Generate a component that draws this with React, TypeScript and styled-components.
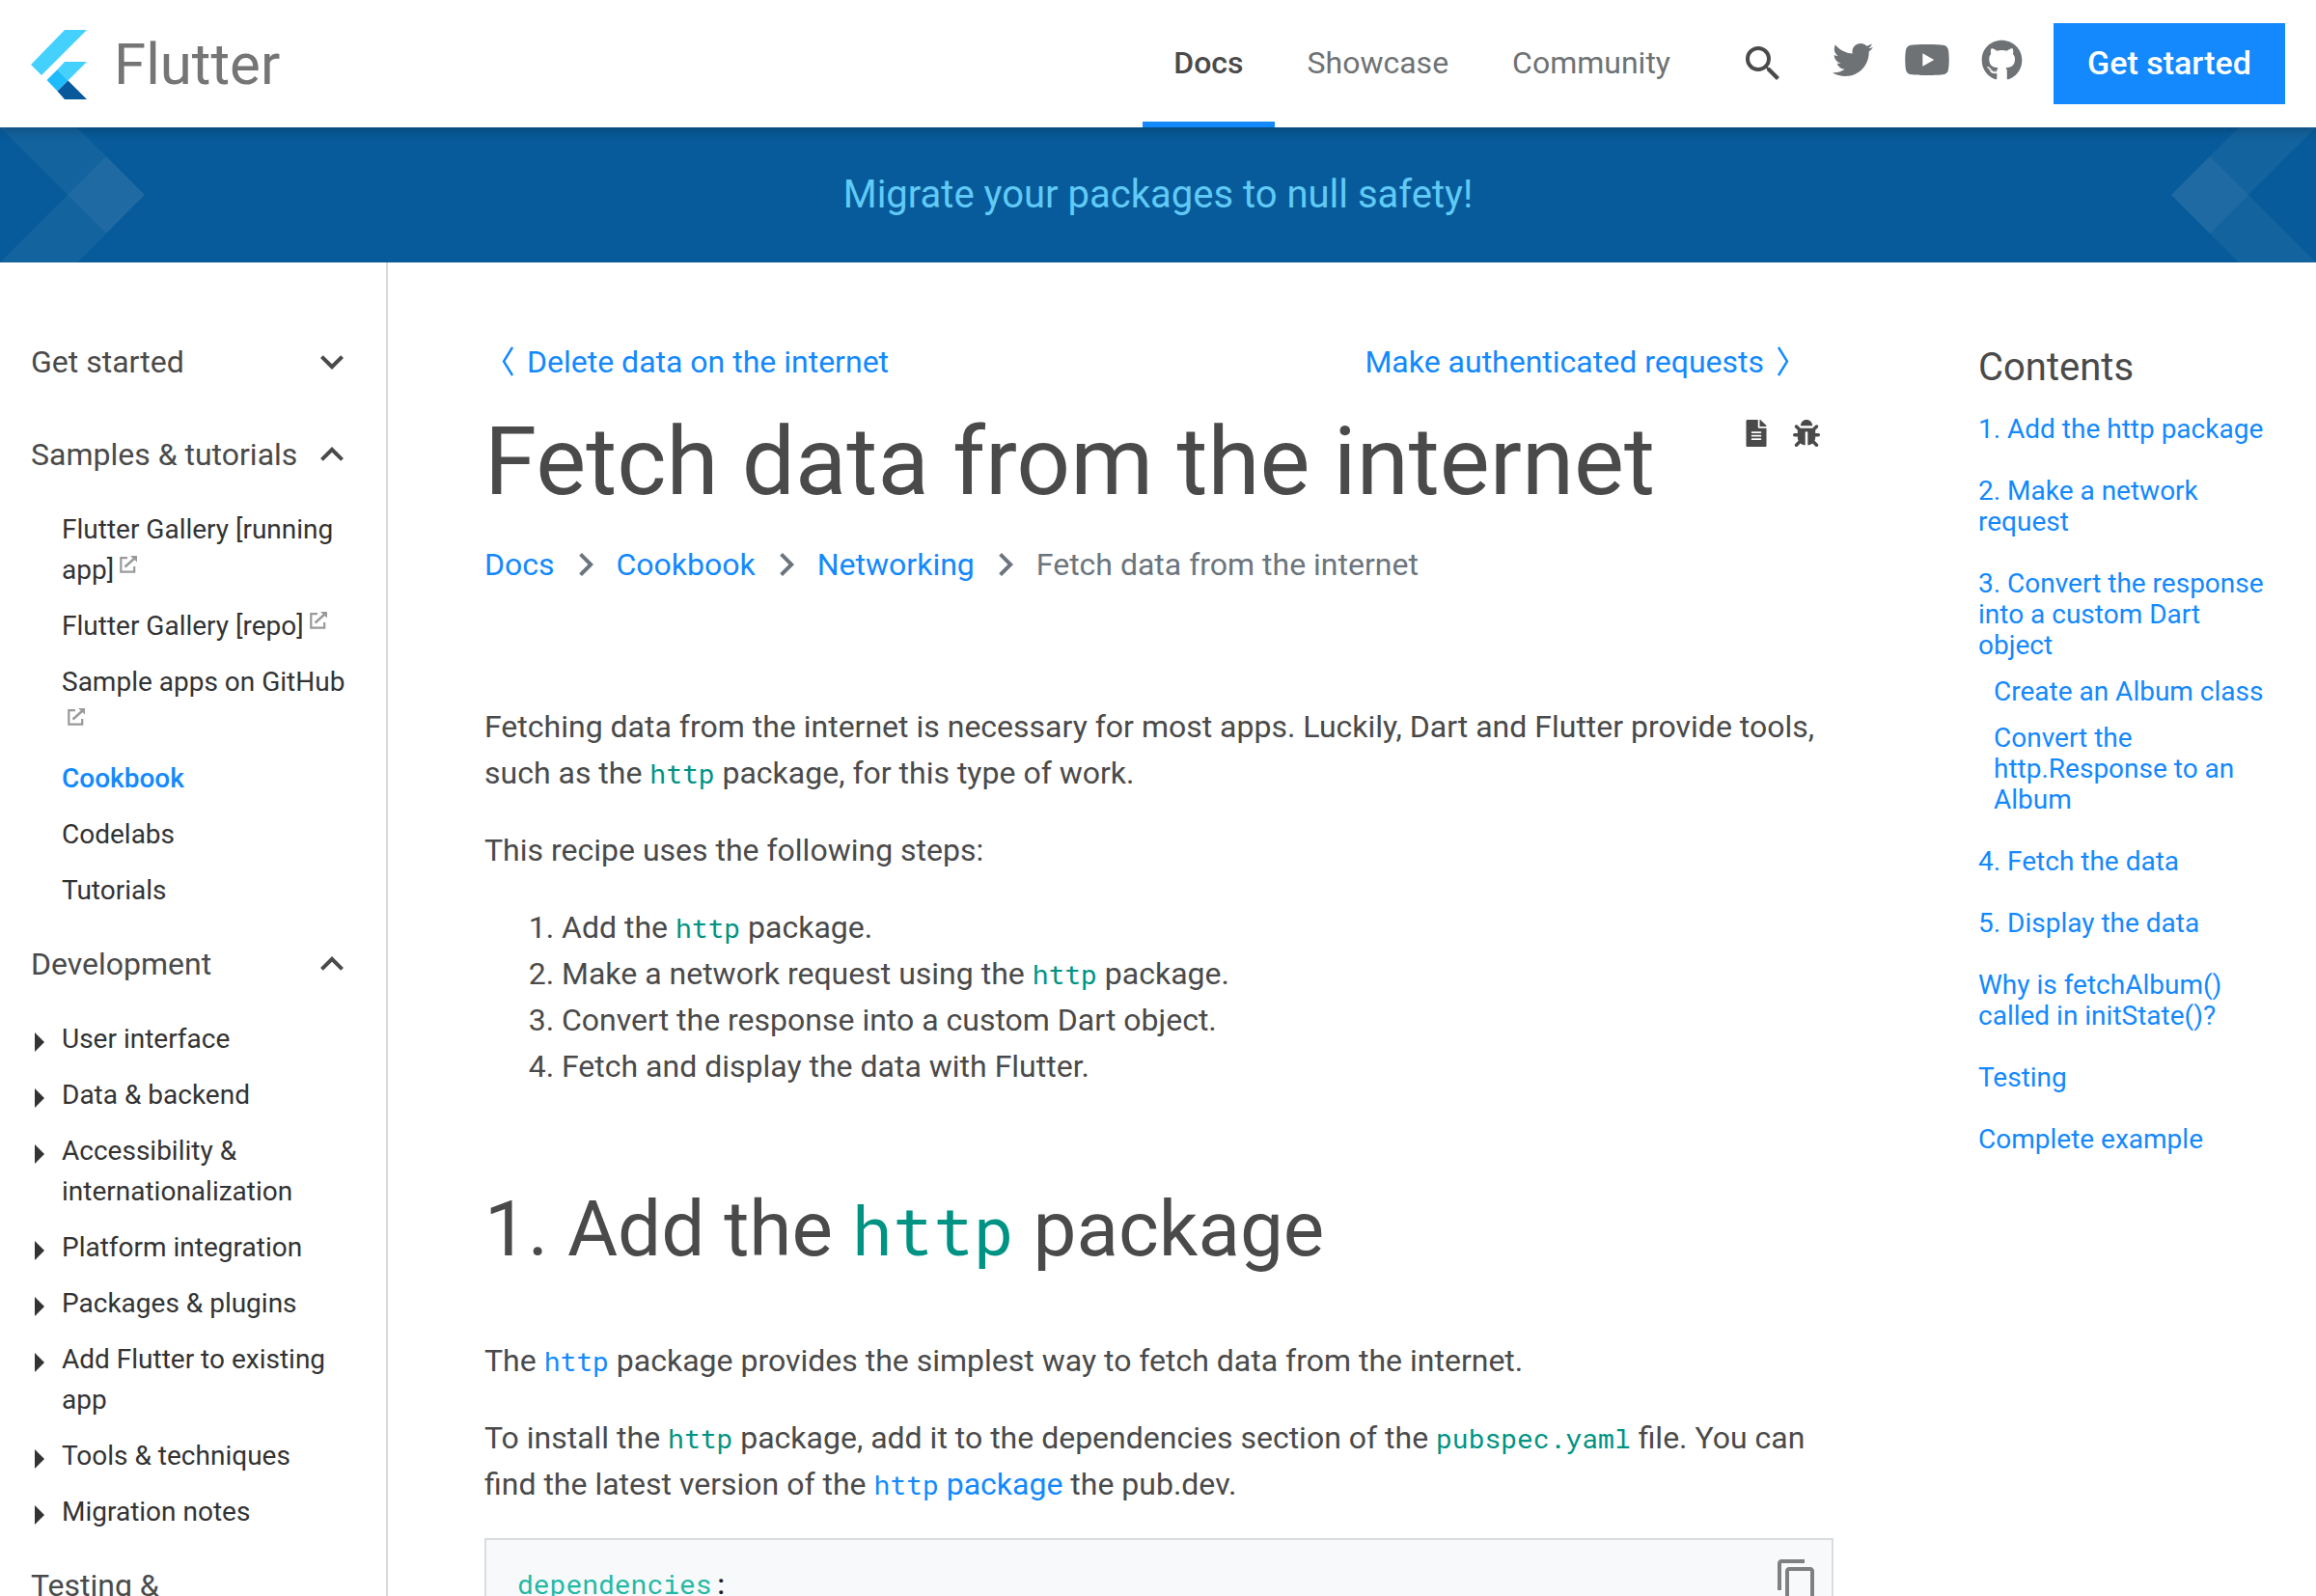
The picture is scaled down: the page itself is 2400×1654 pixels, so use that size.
import React from "react";
import styled, { createGlobalStyle, css } from "styled-components";
import { FaTwitter, FaYoutube, FaGithub, FaFileAlt, FaBug } from "react-icons/fa";
import {
  MdSearch,
  MdExpandMore,
  MdExpandLess,
  MdChevronRight,
  MdContentCopy,
} from "react-icons/md";

const color = {
  text: "#4a4a4a",
  dark: "#333333",
  muted: "#6c757d",
  icon: "#6e7274",
  link: "#1389fd",
  code: "#009384",
  banner: "#075b9a",
};

const font = {
  display: `"Google Sans", Roboto, sans-serif`,
  body: `Roboto, sans-serif`,
  mono: `"Roboto Mono", "DejaVu Sans Mono", monospace`,
};

const GlobalStyle = createGlobalStyle`
  * { box-sizing: border-box; }
  body {
    margin: 0;
    background: #fff;
    color: ${color.text};
    font: 400 32px/48px ${font.body};
  }
  a { color: ${color.link}; text-decoration: none; }
  ul, ol { margin: 0; padding: 0; }
  ul { list-style: none; }
  svg { display: block; flex: none; }
`;

const Page = styled.div`
  display: flex;
  flex-direction: column;
  height: 100vh;
  overflow: hidden;
`;

const Header = styled.header`
  display: flex;
  align-items: center;
  flex: none;
  height: 132px;
  padding: 0 32px;
  background: #fff;
  box-shadow: 0 4px 10px rgba(0, 0, 0, 0.2);
  z-index: 1;
`;

const Brand = styled.a`
  display: flex;
  align-items: center;
  gap: 28px;
  margin-right: auto;
  padding-top: 2px;
  font: 400 60px/72px ${font.display};
  color: #757575;
`;

const Nav = styled.nav`
  display: flex;
  gap: 2px;
  height: 100%;
  font-family: ${font.display};
`;

const NavLink = styled.a<{ $active?: boolean }>`
  display: flex;
  align-items: center;
  padding: 0 32px 2px;
  color: ${color.icon};
  border: solid transparent;
  border-width: 6px 0;
  ${(p) =>
    p.$active &&
    css`
      color: ${color.text};
      font-weight: 500;
      border-bottom-color: ${color.link};
    `}
`;

const IconButton = styled.button`
  padding: 0;
  border: 0;
  background: none;
  color: ${(p) => p.color ?? color.text};
  font-size: 48px;
  line-height: 1;
`;

const SearchButton = styled(IconButton)`
  margin: 0 48px 0 40px;
`;

const Social = styled.div`
  display: flex;
  align-items: center;
  gap: 32px;
  padding-bottom: 8px;
  a { color: ${color.icon}; }
`;

const CtaButton = styled.button`
  min-width: 240px;
  height: 84px;
  margin-left: 32px;
  padding: 0 32px 2px;
  border: 0;
  background: ${color.link};
  color: #fff;
  font: 500 34px/48px ${font.display};
`;

const Banner = styled.div`
  display: flex;
  align-items: center;
  justify-content: space-between;
  flex: none;
  height: 140px;
  background: ${color.banner};
  font: 400 40px/48px ${font.display};
  a { color: #60caf6; }
`;

const Body = styled.div`
  display: flex;
  flex: 1;
  min-height: 0;
`;

const Sidebar = styled.nav`
  flex: none;
  width: 402px;
  padding: 79px 32px 0;
  border-right: 2px solid #d9d9d9;
  font-family: ${font.display};
  overflow: hidden;
`;

const SectionButton = styled.button`
  display: flex;
  align-items: center;
  justify-content: space-between;
  width: 100%;
  padding: 0;
  border: 0;
  background: none;
  color: ${color.text};
  font: inherit;
  text-align: left;
  white-space: nowrap;
`;

const Section = styled.section`
  margin-bottom: 31px;
`;

const CollapsedSection = styled.section`
  margin-bottom: 48px;
`;

const SubList = styled.ul`
  display: flex;
  flex-direction: column;
  gap: 16px;
  margin: 33px -8px 0 0;
  font-size: 28px;
  line-height: 42px;
`;

const SubLink = styled.a<{ $active?: boolean; $branch?: boolean }>`
  display: flex;
  padding-left: ${(p) => (p.$branch ? 4 : 32)}px;
  color: ${(p) => (p.$active ? color.link : color.dark)};
  font-weight: ${(p) => (p.$active ? 500 : 400)};
`;

const Triangle = styled.span`
  flex: none;
  height: 20px;
  margin: 14px 18px 0 0;
  border: solid transparent;
  border-width: 10px 0 10px 10px;
  border-left-color: ${color.dark};
`;

const ExternalMark = styled.svg`
  display: inline-block;
  width: 18px;
  height: 18px;
  margin-left: 6px;
  vertical-align: 6px;
`;

const Main = styled.main`
  flex: 1;
  min-width: 0;
  padding: 79px 150px 0 100px;
`;

const PageNav = styled.nav`
  display: flex;
  justify-content: space-between;
  padding: 0 46px 0 18px;
  a {
    display: flex;
    align-items: center;
    gap: 14px;
  }
`;

const TitleRow = styled.div`
  display: flex;
  justify-content: space-between;
  align-items: flex-start;
  margin: 24px 0 26px;
`;

const Title = styled.h1`
  margin: 0;
  font: 400 98px/112px ${font.display};
`;

const TitleActions = styled.div`
  display: flex;
  gap: 24px;
  padding: 12px 14px 0 0;
  a { color: ${color.text}; }
  svg { width: auto; height: 28px; }
`;

const Breadcrumbs = styled.ol`
  display: flex;
  align-items: center;
  list-style: none;
  gap: 8px;
  margin-bottom: 120px;
  color: ${color.muted};
  li {
    display: flex;
    align-items: center;
    gap: 8px;
  }
`;

const Paragraph = styled.p`
  margin: 0 0 32px;
`;

const Steps = styled.ol`
  padding-left: 80px;
`;

const Heading = styled.h2`
  margin: 97px 0 64px;
  font: 400 80px/96px ${font.display};
`;

const Code = styled.code<{ $size?: number }>`
  color: ${color.code};
  font-family: ${font.mono};
  font-size: ${(p) => p.$size ?? 28}px;
  line-height: 1;
  a & { color: inherit; }
`;

const CodeBlock = styled.div`
  display: flex;
  justify-content: space-between;
  align-items: flex-start;
  padding: 18px 12px 32px 32px;
  border: 2px solid #dadce0;
  background: #f8f9fa;
  pre {
    margin: 7px 0 0;
    color: #212121;
    font: 400 28px/42px ${font.mono};
  }
  pre span { color: #22b8a6; }
`;

const Toc = styled.aside`
  flex: none;
  width: 350px;
  padding: 85px 40px 0 0;
  font-size: 28px;
  line-height: 32px;
`;

const TocTitle = styled.h2`
  margin: 0 0 24px;
  font: 400 40px/48px ${font.display};
`;

const TocList = styled.ul`
  display: flex;
  flex-direction: column;
  gap: 32px;
`;

const TocSubList = styled.ul`
  display: flex;
  flex-direction: column;
  gap: 16px;
  margin: 16px 0 0 16px;
`;

const FlutterMark = () => (
  <svg width="58" height="72" viewBox="0 0 58 72" aria-hidden="true">
    <path d="M35 0H58L11 47L0 36Z" fill="#45d1fd" />
    <path d="M35 33H58L38.5 52.5L27.5 41Z" fill="#45d1fd" />
    <path d="M16.5 52L27.5 41L38.5 52.5L27.5 63.5Z" fill="#1fbcfd" />
    <path d="M38.5 52.5L27.5 63.5L35 72H58Z" fill="#08589c" />
  </svg>
);

const BannerArrow = ({ flip = false }: { flip?: boolean }) => (
  <svg width="150" height="140" viewBox="0 0 150 140" aria-hidden="true">
    <g transform={flip ? "translate(150 0) scale(-1 1)" : undefined} fill="#fff">
      <path d="M0 0H80L150 70L80 140H0L70 70Z" fillOpacity="0.05" />
      <path d="M110 30L150 70L110 110L70 70Z" fillOpacity="0.05" />
    </g>
  </svg>
);

const Angle = ({ right = false }: { right?: boolean }) => (
  <svg width="12" height="32" viewBox="0 0 12 32" fill="none" stroke="currentColor" strokeWidth="2.4" aria-hidden="true">
    <path d={right ? "M1 1L10 15.500L1 30" : "M11 1L2 15.500L11 30"} />
  </svg>
);

const External = () => (
  <ExternalMark viewBox="0 0 18 18" aria-hidden="true">
    <path d="M8 2.200H1.300V16.700H15.200V11" fill="none" stroke="#999" strokeWidth="2.200" />
    <path d="M5.500 11.500L15 3" stroke="#999" strokeWidth="2.400" />
    <path d="M11 0H18V6.500Z" fill="#999" />
  </ExternalMark>
);

type Item = { label: string; external?: boolean; active?: boolean };

const samples: Item[] = [
  { label: "Flutter Gallery [running app]", external: true },
  { label: "Flutter Gallery [repo]", external: true },
  { label: "Sample apps on GitHub", external: true },
  { label: "Cookbook", active: true },
  { label: "Codelabs" },
  { label: "Tutorials" },
];

const development = [
  "User interface",
  "Data & backend",
  "Accessibility & internationalization",
  "Platform integration",
  "Packages & plugins",
  "Add Flutter to existing app",
  "Tools & techniques",
  "Migration notes",
];

const contents: { label: string; children?: string[] }[] = [
  { label: "1. Add the http package" },
  { label: "2. Make a network request" },
  {
    label: "3. Convert the response into a custom Dart object",
    children: ["Create an Album class", "Convert the http.Response to an Album"],
  },
  { label: "4. Fetch the data" },
  { label: "5. Display the data" },
  { label: "Why is fetchAlbum() called in initState()?" },
  { label: "Testing" },
  { label: "Complete example" },
];

export default function App() {
  return (
    <Page>
      <GlobalStyle />
      <Header>
        <Brand href="#">
          <FlutterMark />
          Flutter
        </Brand>
        <Nav>
          <NavLink href="#" $active>Docs</NavLink>
          <NavLink href="#">Showcase</NavLink>
          <NavLink href="#">Community</NavLink>
        </Nav>
        <SearchButton aria-label="Search"><MdSearch /></SearchButton>
        <Social>
          <a href="#" aria-label="Twitter"><FaTwitter size={42} /></a>
          <a href="#" aria-label="YouTube"><FaYoutube size={48} /></a>
          <a href="#" aria-label="GitHub"><FaGithub size={43} /></a>
        </Social>
        <CtaButton>Get started</CtaButton>
      </Header>

      <Banner>
        <BannerArrow />
        <a href="#">Migrate your packages to null safety!</a>
        <BannerArrow flip />
      </Banner>

      <Body>
        <Sidebar aria-label="Documentation">
          <CollapsedSection>
            <SectionButton aria-expanded={false}>
              Get started <MdExpandMore size={48} />
            </SectionButton>
          </CollapsedSection>
          <Section>
            <SectionButton aria-expanded>
              Samples &amp; tutorials <MdExpandLess size={48} />
            </SectionButton>
            <SubList>
              {samples.map((item) => (
                <li key={item.label}>
                  <SubLink href="#" $active={item.active}>
                    <span>
                      {item.label}
                      {item.external && <><wbr /><External /></>}
                    </span>
                  </SubLink>
                </li>
              ))}
            </SubList>
          </Section>
          <Section>
            <SectionButton aria-expanded>
              Development <MdExpandLess size={48} />
            </SectionButton>
            <SubList>
              {development.map((label) => (
                <li key={label}>
                  <SubLink href="#" $branch>
                    <Triangle />
                    <span>{label}</span>
                  </SubLink>
                </li>
              ))}
            </SubList>
          </Section>
          <Section>
            <SectionButton aria-expanded={false}>Testing &amp;</SectionButton>
          </Section>
        </Sidebar>

        <Main>
          <PageNav aria-label="Pages">
            <a href="#"><Angle />Delete data on the internet</a>
            <a href="#">Make authenticated requests<Angle right /></a>
          </PageNav>
          <TitleRow>
            <Title>Fetch data from the internet</Title>
            <TitleActions>
              <a href="#" aria-label="View page source"><FaFileAlt /></a>
              <a href="#" aria-label="Report an issue with this page"><FaBug /></a>
            </TitleActions>
          </TitleRow>
          <Breadcrumbs>
            {["Docs", "Cookbook", "Networking"].map((label) => (
              <li key={label}>
                <a href="#">{label}</a>
                <MdChevronRight size={48} />
              </li>
            ))}
            <li>Fetch data from the internet</li>
          </Breadcrumbs>

          <Paragraph>
            Fetching data from the internet is necessary for most apps. Luckily, Dart and
            Flutter provide tools, such as the <Code>http</Code> package, for this type of work.
          </Paragraph>
          <Paragraph>This recipe uses the following steps:</Paragraph>
          <Steps>
            <li>Add the <Code>http</Code> package.</li>
            <li>Make a network request using the <Code>http</Code> package.</li>
            <li>Convert the response into a custom Dart object.</li>
            <li>Fetch and display the data with Flutter.</li>
          </Steps>

          <Heading>1. Add the <Code $size={70}>http</Code> package</Heading>
          <Paragraph>
            The <a href="#"><Code>http</Code></a> package provides the simplest way to fetch data
            from the internet.
          </Paragraph>
          <Paragraph>
            To install the <Code>http</Code> package, add it to the dependencies section of
            the <Code>pubspec.yaml</Code> file. You can find the latest version of
            the <a href="#"><Code>http</Code> package</a> the pub.dev.
          </Paragraph>
          <CodeBlock>
            <pre><span>dependencies</span>:</pre>
            <IconButton color="#808080" aria-label="Copy code"><MdContentCopy /></IconButton>
          </CodeBlock>
        </Main>

        <Toc>
          <TocTitle>Contents</TocTitle>
          <TocList>
            {contents.map((entry) => (
              <li key={entry.label}>
                <a href="#">{entry.label}</a>
                {entry.children && (
                  <TocSubList>
                    {entry.children.map((label) => (
                      <li key={label}><a href="#">{label}</a></li>
                    ))}
                  </TocSubList>
                )}
              </li>
            ))}
          </TocList>
        </Toc>
      </Body>
    </Page>
  );
}
